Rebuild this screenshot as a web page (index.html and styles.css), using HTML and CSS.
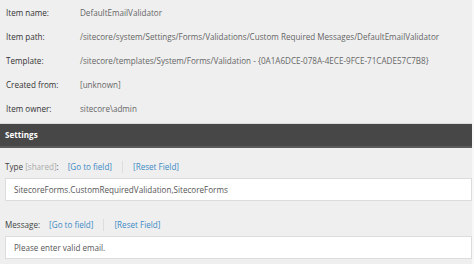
FILE: index.html
```html
<!DOCTYPE html>
<html lang="en">
<head>
    <meta charset="UTF-8">
    <meta name="viewport" content="width=device-width, initial-scale=1.0">
    <title>DefaultEmailValidator</title>
    <link rel="stylesheet" href="styles.css">
</head>
<body>

    <div class="page">
        <!-- Quick info -->
        <div class="info">
            <div class="row"><span class="label">Item name:</span><span class="value">DefaultEmailValidator</span></div>
            <div class="row"><span class="label">Item path:</span><span class="value">/sitecore/system/Settings/Forms/Validations/Custom Required Messages/DefaultEmailValidator</span></div>
            <div class="row"><span class="label">Template:</span><span class="value">/sitecore/templates/System/Forms/Validation - {0A1A6DCE-078A-4ECE-9FCE-71CADE57C7B8}</span></div>
            <div class="row"><span class="label">Created from:</span><span class="value">[unknown]</span></div>
            <div class="row"><span class="label">Item owner:</span><span class="value">sitecore\admin</span></div>
        </div>

        <div class="section-header">Settings</div>

        <div class="section">
            <div class="field">
                <div class="field-label">
                    <span class="name">Type <span class="shared">[shared]</span>:</span>
                    <a href="#">[Go to field]</a>
                    <span class="sep"></span>
                    <a href="#">[Reset Field]</a>
                </div>
                <div class="field-input">SitecoreForms.CustomRequiredValidation,SitecoreForms</div>
            </div>

            <div class="field">
                <div class="field-label">
                    <span class="name">Message:</span>
                    <a href="#">[Go to field]</a>
                    <span class="sep"></span>
                    <a href="#">[Reset Field]</a>
                </div>
                <div class="field-input">Please enter valid email.</div>
            </div>
        </div>
    </div>

</body>
</html>
```

FILE: styles.css
```css
body {
    font-family: 'Open Sans', sans-serif;
    font-size: 8.1px;
    background-color: #f8f8f8;
    margin: 0;
    color: #333;
}

.page {
    width: 472px;
    height: 264px;
    background-color: #efefef;
    overflow: hidden;
}

/* Quick info rows */
.info {
    padding-left: 6px;
}

.row {
    display: flex;
    align-items: center;
    height: 24px;
    white-space: nowrap;
}

.row .label {
    flex: 0 0 74px;
    color: #333;
}

.row .value {
    color: #666;
}

/* Section header */
.section-header {
    margin-top: 3px;
    height: 22px;
    line-height: 22px;
    padding-left: 5px;
    background-color: #474747;
    border-top: 1px solid #dadada;
    border-bottom: 2px solid #5a5a5a;
    color: #fff;
    font-weight: bold;
}

.section {
    padding: 7px 0 0 5px;
}

.field-label {
    display: flex;
    align-items: center;
    height: 23px;
    color: #444;
}

.field-label .name {
    margin-right: 9px;
}

.shared {
    color: #aaa;
}

.field-label a {
    color: #3d8ac4;
    text-decoration: none;
}

.sep {
    width: 1px;
    height: 12px;
    background-color: #ddd;
    margin: 0 10px 0 10px;
}

.field-input {
    height: 21px;
    line-height: 21px;
    padding-left: 8px;
    background-color: #fff;
    border: 1px solid #dcdcdc;
    color: #555;
    margin-bottom: 12px;
}
```
